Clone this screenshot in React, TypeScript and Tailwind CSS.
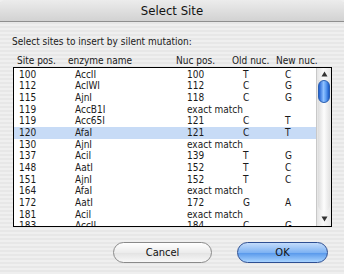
import React from "react";

type Row = { site: string; enz: string; nuc?: string; old?: string; nw?: string; exact?: boolean; sel?: boolean };

const rows: Row[] = [
  { site: "100", enz: "AccII", nuc: "100", old: "T", nw: "C" },
  { site: "112", enz: "AclWI", nuc: "112", old: "C", nw: "G" },
  { site: "115", enz: "AjnI", nuc: "118", old: "C", nw: "G" },
  { site: "119", enz: "AccB1I", exact: true },
  { site: "119", enz: "Acc65I", nuc: "121", old: "C", nw: "T" },
  { site: "120", enz: "AfaI", nuc: "121", old: "C", nw: "T", sel: true },
  { site: "130", enz: "AjnI", exact: true },
  { site: "137", enz: "AciI", nuc: "139", old: "T", nw: "G" },
  { site: "148", enz: "AatI", nuc: "152", old: "T", nw: "C" },
  { site: "151", enz: "AjnI", nuc: "152", old: "T", nw: "C" },
  { site: "164", enz: "AfaI", exact: true },
  { site: "172", enz: "AatI", nuc: "172", old: "G", nw: "A" },
  { site: "181", enz: "AciI", exact: true },
  { site: "183", enz: "AccII", nuc: "184", old: "C", nw: "G" },
];

const font = { fontFamily: '"DejaVu Sans Condensed", "DejaVu Sans", "Noto Sans", sans-serif' };

export default function App() {
  return (
    <div
      className="w-[344px] h-[274px] overflow-hidden text-[#1a1a1a] bg-[repeating-linear-gradient(180deg,#efefef_0px,#efefef_2px,#e7e7e7_2px,#e7e7e7_4px)]"
      style={font}
    >
      {/* title bar */}
      <div className="h-[22px] flex items-center justify-center border-b border-[#8f8f8f] bg-[linear-gradient(180deg,#ececec,#d2d2d2)] rounded-t-[5px]">
        <span className="text-[13px] leading-none text-[#111]">Select Site</span>
      </div>

      <div className="pl-[12px] pt-[14px] text-[10px] leading-[12px]">
        Select sites to insert by silent mutation:
      </div>

      {/* header */}
      <div className="flex text-[10px] leading-[12px] mt-[7px] h-[12px]">
        <span className="ml-[17px] w-[51px]">Site pos.</span>
        <span className="w-[108px]">enzyme name</span>
        <span className="w-[56px]">Nuc pos.</span>
        <span className="w-[44px]">Old nuc.</span>
        <span>New nuc.</span>
      </div>

      {/* list */}
      <div className="ml-[13px] w-[319px] h-[160px] border border-black bg-white flex overflow-hidden">
        <div className="flex-1 flex flex-col pt-[1px]">
          {rows.map((r, i) => (
            <div
              key={i}
              className={`flex shrink-0 h-[11.65px] items-center text-[10px] leading-none ${r.sel ? "bg-[#c7dbf6]" : ""}`}
            >
              <span className="pl-[5px] w-[61px]">{r.site}</span>
              <span className="w-[112px]">{r.enz}</span>
              {r.exact ? (
                <span>exact match</span>
              ) : (
                <>
                  <span className="w-[56px]">{r.nuc}</span>
                  <span className="w-[42px]">{r.old}</span>
                  <span>{r.nw}</span>
                </>
              )}
            </div>
          ))}
        </div>
        {/* scrollbar */}
        <div className="w-[15px] flex flex-col border-l border-[#c8c8c8] bg-[linear-gradient(90deg,#e4e4e4,#fafafa_45%,#e8e8e8)]">
          <div className="h-[12px] flex items-center justify-center">
            <svg width="7" height="6" viewBox="0 0 7 6">
              <path d="M3.5 0.5 L6.5 5.5 L0.5 5.5 Z" fill="#333" />
            </svg>
          </div>
          <div className="flex-1 relative mx-[1px] rounded-b-[6px] bg-[linear-gradient(90deg,#dcdcdc,#fdfdfd_50%,#e2e2e2)]">
            <div className="absolute left-0 right-0 top-[0px] h-[23px] rounded-[6px] border border-[#2a5fb0] bg-[linear-gradient(90deg,#1f5fd0,#8ec0ff_45%,#5b9cf2_70%,#1b5ac8)]" />
          </div>
          <div className="h-[15px] flex items-center justify-center">
            <svg width="7" height="6" viewBox="0 0 7 6">
              <path d="M0.5 0.5 L6.5 0.5 L3.5 5.5 Z" fill="#333" />
            </svg>
          </div>
        </div>
      </div>

      {/* buttons */}
      <div className="flex mt-[15px] ml-[113px] gap-[25px]">
        <button className="w-[99px] h-[21px] rounded-full border border-[#8a8a8a] bg-[linear-gradient(180deg,#ffffff,#ececec_50%,#e2e2e2_51%,#f8f8f8)] text-[11px] leading-none text-[#111]">
          Cancel
        </button>
        <button className="w-[91px] h-[21px] rounded-full border border-[#2e4f92] bg-[linear-gradient(180deg,#c3dcfb,#7fb3f3_50%,#5596ea_51%,#a8d3ff)] text-[11px] leading-none text-[#111]">
          OK
        </button>
      </div>
    </div>
  );
}
